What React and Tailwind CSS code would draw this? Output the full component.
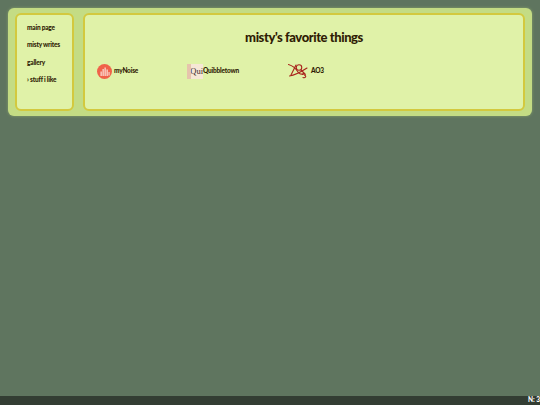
const NAV = ["main page", "misty writes", "gallery", "› stuff i like"];

function NoiseIcon() {
  return (
    <svg width="15" height="15" viewBox="0 0 30 30">
      <circle cx="15" cy="15" r="15" fill="#f0634a" />
      <rect x="7" y="15" width="2.6" height="9" fill="#fbd9cf" />
      <rect x="11" y="10" width="2.6" height="14" fill="#fbd9cf" />
      <rect x="15" y="7" width="2.6" height="17" fill="#fbd9cf" />
      <rect x="19" y="11" width="2.6" height="13" fill="#fbd9cf" />
      <rect x="23" y="16" width="2.2" height="7" fill="#fbd9cf" />
    </svg>
  );
}

function QuiIcon() {
  return (
    <div className="flex h-[15px] w-[16px] items-center justify-end overflow-hidden border-l-[4px] border-[#e6c4ac] bg-[#f6e7d5] font-['Liberation_Serif',serif] text-[8.5px] leading-none font-normal tracking-normal text-[#3a2a2a]">
      Qui
    </div>
  );
}

function Ao3Icon() {
  return (
    <svg width="20" height="16" viewBox="0 0 40 32" fill="none" stroke="#a8231c" strokeWidth="2.2" strokeLinecap="round">
      <path d="M1 3 C8 5 15 10 20 18 C23 23 27 23 31 21" />
      <path d="M3 26 C10 25 24 19 38 10" />
      <path d="M6 24 L16 4" />
      <circle cx="22" cy="9" r="5.5" />
      <path d="M26 14 L34 22" />
      <path d="M29 23 C33 21 36 23 34 25 C37 26 35 31 30 29" />
    </svg>
  );
}

function FavLink({ icon, label, className }) {
  return (
    <a className={`flex items-center text-[6.5px] font-black tracking-[-0.2px] text-[#2f1c04] ${className}`}>
      {icon}
      <span>{label}</span>
    </a>
  );
}

export default function App() {
  return (
    <div className="flex h-[405px] w-[540px] flex-col overflow-hidden bg-[#5f755f] font-['Lato',sans-serif]">
      <div className="flex-1 p-2">
        <div className="flex h-[108px] gap-[9px] rounded-md bg-[#c4dc84] px-[7px] py-[5px] shadow-[0_0_3px_#8aa56a]">
          {/* sidebar */}
          <nav className="flex w-[59px] flex-col gap-[8.4px] rounded-md border-2 border-[#d3c93e] bg-[#e0f2a8] pl-[10px] pt-[8px] text-[6.5px] leading-[9px] font-black tracking-[-0.2px] text-[#2f1c04]">
            {NAV.map((item) => (
              <a key={item}>{item}</a>
            ))}
          </nav>

          {/* main box */}
          <main className="flex-1 rounded-md border-2 border-[#d3c93e] bg-[#e0f2a8]">
            <h1 className="mt-[13px] mb-[17px] text-center text-[13px] leading-[18px] font-black tracking-[-0.43px] text-[#2f1c04]">
              misty's favorite things
            </h1>
            <div className="flex items-center pl-[12px]">
              <FavLink icon={<NoiseIcon />} label="myNoise" className="w-[90px] gap-[2px]" />
              <FavLink icon={<QuiIcon />} label="Quibbletown" className="w-[101px]" />
              <FavLink icon={<Ao3Icon />} label="AO3" className="gap-[3px]" />
            </div>
          </main>
        </div>
      </div>

      {/* bottom bar */}
      <div className="flex h-[9px] items-center justify-end bg-[#333d33] text-[6.5px] leading-none font-black text-white">
        N: 3
      </div>
    </div>
  );
}
